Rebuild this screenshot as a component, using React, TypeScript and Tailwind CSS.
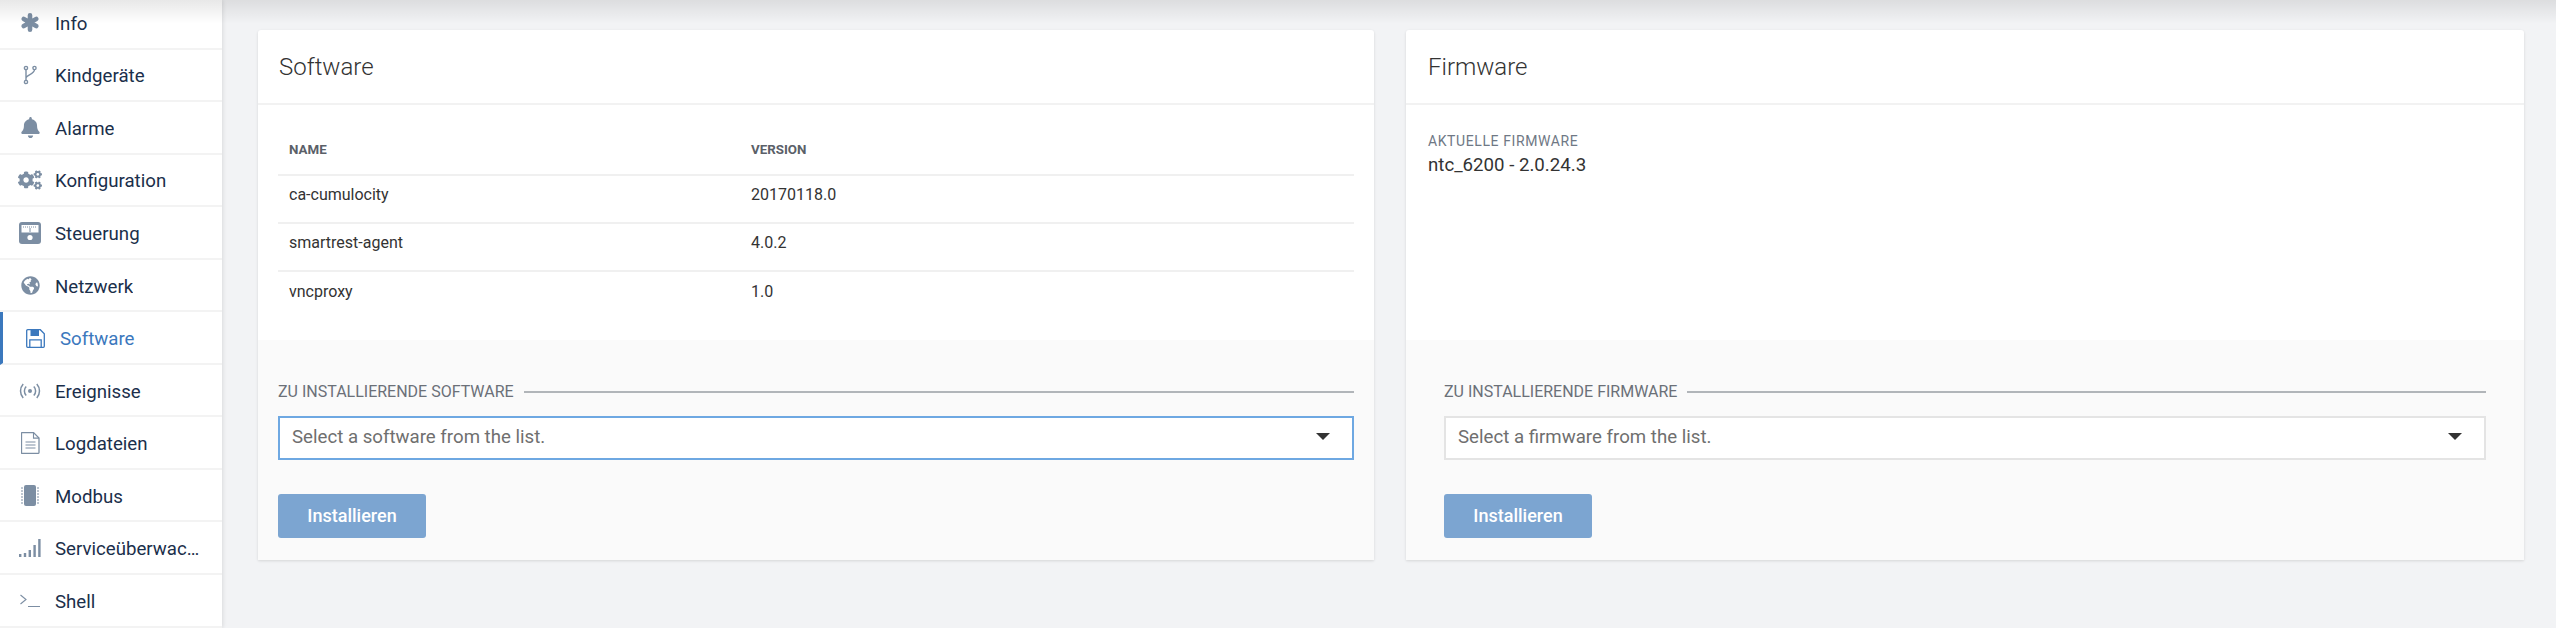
import React from 'react';
import { FaBell, FaCogs, FaGlobeAmericas } from 'react-icons/fa';

const AsteriskIcon = () => (
  <svg width="18" height="19" viewBox="0 0 18 19" fill="none" stroke="currentColor" strokeWidth="4.600" strokeLinecap="round">
    <path d="M9 2.300v14.400M2.800 5.900l12.400 7.200M15.200 5.900L2.800 13.100" />
  </svg>
);

const ForkIcon = () => (
  <svg width="14" height="20" viewBox="0 0 14 20" fill="none" stroke="currentColor" strokeWidth="1.4">
    <circle cx="3" cy="3" r="1.6" />
    <circle cx="3" cy="17" r="1.6" />
    <circle cx="11.5" cy="3" r="1.6" />
    <path d="M3 4.6v10.8M3 13c0-3 8.5-3.5 8.5-8.4" />
  </svg>
);

const PanelIcon = () => (
  <svg width="22" height="22" viewBox="0 0 22 22">
    <rect width="22" height="22" rx="3" fill="currentColor" />
    <path d="M2.5 3h17v7.5h-17z" fill="#fff" />
    <path d="M4 5h14" stroke="currentColor" strokeWidth="1.2" strokeDasharray="1 1" />
    <path d="M11 6v4" stroke="currentColor" strokeWidth="1" />
    <circle cx="11" cy="15.5" r="2.6" fill="#fff" />
  </svg>
);

const FloppyIcon = () => (
  <svg width="19" height="19" viewBox="0 0 19 19" fill="none" stroke="currentColor" strokeWidth="1.300">
    <path d="M1.700 0.700h12.600l4 4v12.600a1 1 0 0 1-1 1H1.700a1 1 0 0 1-1-1V1.700a1 1 0 0 1 1-1z" />
    <path d="M4.500 1h8.500v6H4.500z" fill="currentColor" stroke="none" />
    <path d="M3.800 18v-7.200h11.400V18" />
  </svg>
);

const SignalIcon = () => (
  <svg width="22" height="20" viewBox="0 0 22 20">
    <path d="M0 16h2.4v3H0zM4.8 15h2.4v4H4.800zM9.600 12h2.400v7H9.600zM14.400 7h2.400v12h-2.400zM19.200 1h2.400v18h-2.400z" fill="currentColor" />
  </svg>
);

const BroadcastIcon = () => (
  <svg width="22" height="16" viewBox="0 0 22 16" fill="none" stroke="currentColor" strokeWidth="1.5">
    <circle cx="11" cy="8" r="2" fill="currentColor" stroke="none" />
    <path d="M7.200 3.500a6.500 6.500 0 0 0 0 9M14.800 3.500a6.500 6.500 0 0 1 0 9M4.200 1a10.500 10.500 0 0 0 0 14M17.800 1a10.500 10.500 0 0 1 0 14" />
  </svg>
);

const FileIcon = () => (
  <svg width="19" height="22" viewBox="0 0 19 22" fill="none" stroke="currentColor" strokeWidth="1.100">
    <path d="M1 0.600h11.500l5.500 5.500v14.300a1 1 0 0 1-1 1H1a0.500 0.500 0 0 1-0.500-0.500V1a0.500 0.500 0 0 1 0.500-0.400z" strokeWidth="1.300" />
    <path d="M12.500 0.600v5.500h5.500M4.500 10h10M4.500 13h10M4.500 16h10" />
  </svg>
);

const ChipIcon = () => (
  <svg width="18" height="21" viewBox="0 0 18 21">
    <rect x="3" y="0" width="12" height="21" rx="2" fill="currentColor" />
    <path d="M0 3h2M0 6h2M0 9h2M0 12h2M0 15h2M0 18h2M16 3h2M16 6h2M16 9h2M16 12h2M16 15h2M16 18h2" stroke="currentColor" strokeWidth="1" />
  </svg>
);

const PromptIcon = () => (
  <svg width="20" height="14" viewBox="0 0 20 14" fill="none" stroke="currentColor" strokeWidth="1.100">
    <path d="M0.500 1l5.500 4.500-5.500 4.500M8 12.500h12" />
  </svg>
);

type NavItem = {
  label: string;
  icon: React.ReactNode;
  active?: boolean;
  textClass?: string;
};

const navItems: NavItem[] = [
  { label: 'Info', icon: <AsteriskIcon /> },
  { label: 'Kindgeräte', icon: <ForkIcon /> },
  { label: 'Alarme', icon: <FaBell size={21} /> },
  { label: 'Konfiguration', icon: <FaCogs size={24} /> },
  { label: 'Steuerung', icon: <PanelIcon /> },
  { label: 'Netzwerk', icon: <FaGlobeAmericas size={19} /> },
  { label: 'Software', icon: <FloppyIcon />, active: true },
  { label: 'Ereignisse', icon: <BroadcastIcon /> },
  { label: 'Logdateien', icon: <FileIcon /> },
  { label: 'Modbus', icon: <ChipIcon /> },
  { label: 'Serviceüberwachung', icon: <SignalIcon />, textClass: 'w-[149px] -ml-1' },
  { label: 'Shell', icon: <PromptIcon /> },
];

const softwareRows = [
  { name: 'ca-cumulocity', version: '20170118.0' },
  { name: 'smartrest-agent', version: '4.0.2' },
  { name: 'vncproxy', version: '1.0' },
];

function Sidebar() {
  return (
    <aside className="w-[222px] shrink-0 h-full bg-white overflow-hidden shadow-[1px_0_4px_rgba(0,0,0,0.1)] z-10">
      <ul className="-mt-[3px]">
        {navItems.map((item) => (
          <li
            key={item.label}
            className={
              item.active
                ? 'h-[52.55px] flex items-center border-b-2 border-[#f3f3f3] border-l-[3px] border-l-[#3b78bd] pl-[17px] pt-[5px] text-[#3b78bd]'
                : 'h-[52.55px] flex items-center border-b-2 border-[#f3f3f3] pl-[15px] pt-[5px] text-[#7c8ea3]'
            }
          >
            <span className="w-[30px] flex justify-center shrink-0 -mt-[4px]">{item.icon}</span>
            <span
              className={`ml-[10px] text-[18.66px] truncate ${item.active ? 'text-[#3b78bd]' : 'text-[#1b2f4b]'} ${item.textClass || ''}`}
            >
              {item.label}
            </span>
          </li>
        ))}
      </ul>
    </aside>
  );
}

function InstallFooter({ label, placeholder, focused, wide }: { label: string; placeholder: string; focused?: boolean; wide?: boolean }) {
  return (
    <div className={`h-[220px] bg-[#fafafa] pt-[43px] ${wide ? 'px-[38px]' : 'px-[20px]'}`}>
      <div className="flex items-center h-[18px]">
        <span className="text-[16px] leading-[18px] text-[#6b7078] uppercase whitespace-nowrap">{label}</span>
        <span className="flex-1 ml-[10px] h-[2px] bg-[#b1b5b9]" />
      </div>
      <div
        className={`mt-[15px] h-[44px] flex items-center justify-between bg-white border-2 pl-[12px] pr-[22px] ${
          focused ? 'border-[#6ea8e2]' : 'border-[#e4e4e4]'
        }`}
      >
        <span className="text-[18.66px] -mt-[1px] text-[#6f6f6f]">{placeholder}</span>
        <span className="w-0 h-0 border-x-[7px] border-x-transparent border-t-[7px] border-t-[#333333] -mt-[3px]" />
      </div>
      <button className="block mt-[34px] w-[148px] h-[44px] pb-[2px] rounded-[3px] bg-[#7ca5d1] text-white text-[18px] font-medium">
        Installieren
      </button>
    </div>
  );
}

function SoftwareCard() {
  return (
    <section className="w-[1116px] bg-white rounded-t-[3px] shadow-[0_1px_3px_rgba(0,0,0,0.12)]">
      <h2 className="h-[75px] flex items-center px-[21px] border-b-2 border-[#f2f2f2] text-[24px] font-light text-[#333333]">
        Software
      </h2>
      <div className="h-[235px] px-[20px] pt-[26px]">
        <table className="w-full text-left border-collapse">
          <thead>
            <tr className="h-[44px] border-b-2 border-[#f0f0f0]">
              <th className="w-[473px] pl-[11px] pb-[6px] text-[13.33px] font-bold text-[#5a6068]">NAME</th>
              <th className="pb-[6px] text-[13.33px] font-bold text-[#5a6068]">VERSION</th>
            </tr>
          </thead>
          <tbody>
            {softwareRows.map((row, i) => (
              <tr key={row.name} className={i < 2 ? 'h-[48px] border-b-2 border-[#f0f0f0]' : 'h-[48px]'}>
                <td className="pl-[11px] pb-[8px] text-[16px] text-[#333333]">{row.name}</td>
                <td className="pb-[8px] text-[16px] text-[#333333]">{row.version}</td>
              </tr>
            ))}
          </tbody>
        </table>
      </div>
      <InstallFooter label="Zu installierende Software" placeholder="Select a software from the list." focused />
    </section>
  );
}

function FirmwareCard() {
  return (
    <section className="w-[1118px] bg-white rounded-t-[3px] shadow-[0_1px_3px_rgba(0,0,0,0.12)]">
      <h2 className="h-[75px] flex items-center px-[22px] border-b-2 border-[#f2f2f2] text-[24px] font-light text-[#333333]">
        Firmware
      </h2>
      <div className="h-[235px] px-[22px] pt-[28px]">
        <div className="text-[14px] leading-[16px] tracking-[0.6px] text-[#6f7885]">AKTUELLE FIRMWARE</div>
        <div className="text-[18.66px] leading-[22px] mt-[5px] text-[#333333]">ntc_6200 - 2.0.24.3</div>
      </div>
      <InstallFooter label="Zu installierende Firmware" placeholder="Select a firmware from the list." wide />
    </section>
  );
}

export default function App() {
  return (
    <div className="relative w-[2556px] h-[628px] flex overflow-hidden bg-[#f2f3f5] font-['Roboto',sans-serif]">
      <Sidebar />
      <main className="flex-1 flex gap-[32px] pl-[36px] pr-[32px] pt-[30px] items-start">
        <SoftwareCard />
        <FirmwareCard />
      </main>
      {/* header shadow */}
      <div className="absolute inset-x-0 top-0 h-[24px] z-20 pointer-events-none bg-gradient-to-b from-[rgba(0,0,0,0.09)] to-transparent" />
    </div>
  );
}
